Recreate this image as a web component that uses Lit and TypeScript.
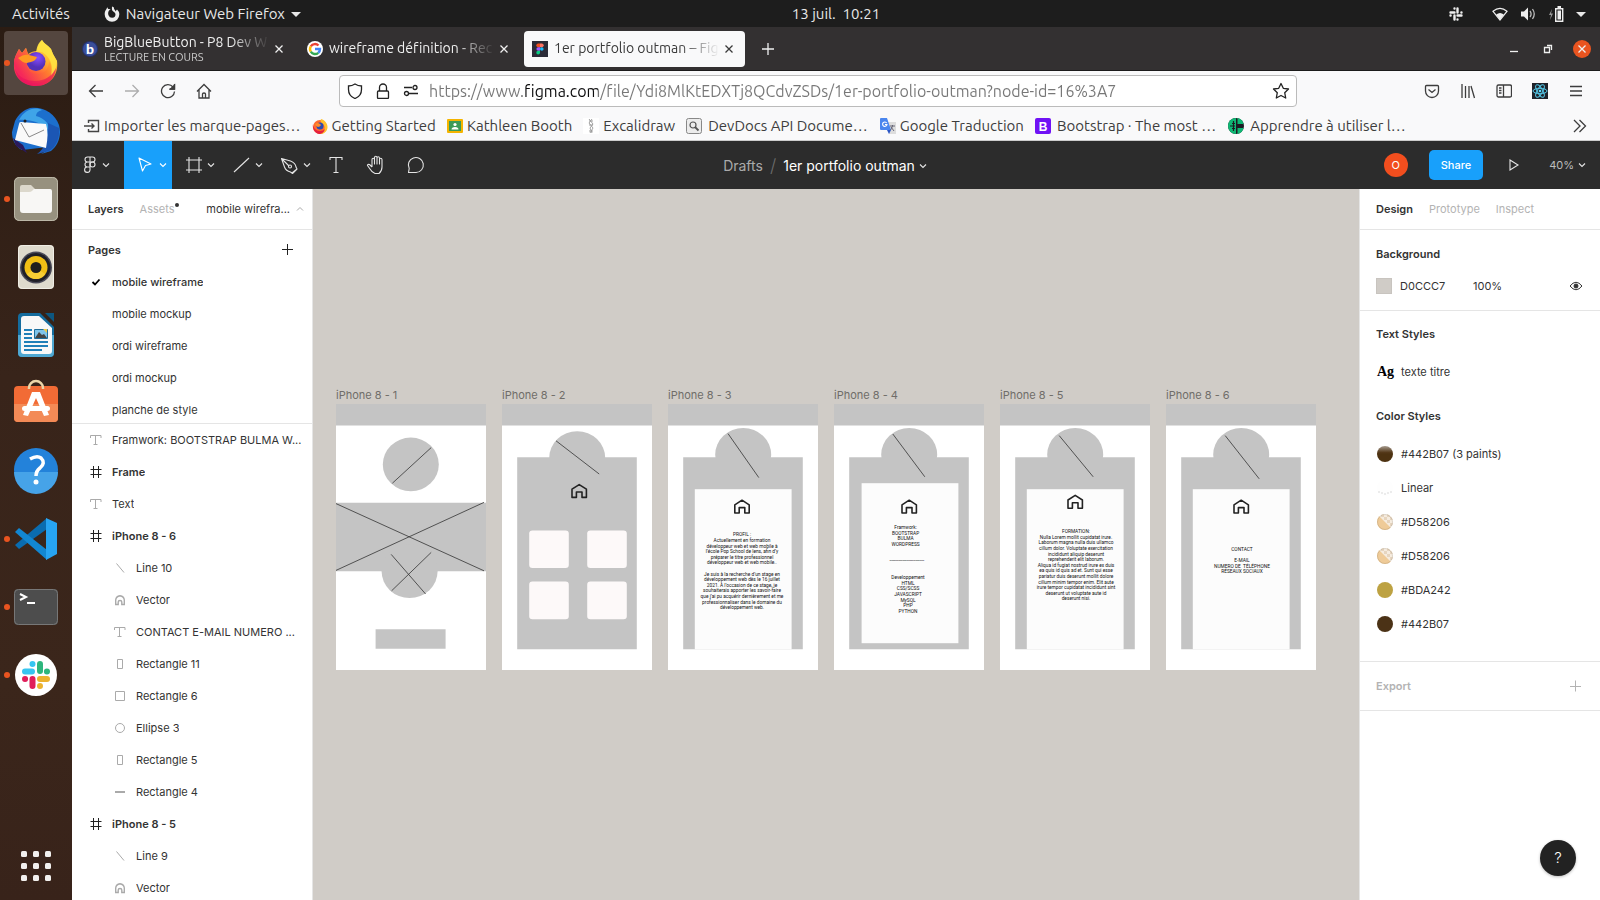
import { LitElement, html, svg, css, nothing, type TemplateResult, type SVGTemplateResult } from "lit";
import { customElement } from "lit/decorators.js";
import { classMap } from "lit/directives/class-map.js";

const icon = (size: number, content: SVGTemplateResult, cls = "") =>
  html`<svg class="icon ${cls}" width=${size} height=${size} viewBox="0 0 ${size} ${size}" aria-hidden="true">${content}</svg>`;

const CHEVRON = svg`<path d="M1 2.500l3 3 3-3" />`;
const CLOSE = svg`<path d="M1.500 1.500l7 7M8.500 1.500l-7 7" />`;
const HOUSE = svg`<path d="M-18 16.500V-4L0-15.500 18-4v20.500H7V3H-7v13.500z" />`;

/* ---------- GNOME top bar ---------- */
@customElement("system-bar")
class SystemBar extends LitElement {
  static styles = css`
    :host { display: grid; grid-template-columns: 1fr auto 1fr; align-items: center; height: 27px; padding-left: 72px;
      background: #1d1d1d; color: #e8e8e8; font: 15px/20px "Ubuntu", "Noto Sans", sans-serif; font-variant-ligatures: none; }
    .left { display: flex; align-items: center; margin-left: -60px; gap: 34px; }
    button { all: unset; display: flex; align-items: center; }
    .app { gap: 6px; }
    .right { display: flex; justify-content: flex-end; align-items: center; gap: 12px; padding-right: 14px; }
    .apart { margin-right: 17px; }
    time { white-space: pre; }
  `;
  render() {
    return html`
      <div class="left">
        <button>Activités</button>
        <button class="app">
          ${icon(16, svg`<path fill="#eee" fill-rule="evenodd" d="M8 .5c2 .4 2.300 1.500 2 2.800 1 .4 1.500 1.200 1.400 2.300L13 3.500c1.600 1.500 2.400 3 2.300 5A7.400 7.400 0 0 1 8 15.800 7.400 7.400 0 0 1 .7 8.500C.6 6.300 1.200 4.500 2.500 3c.2-.8.500-1.300 1-1.700 0 .8.300 1.300.8 1.700C5.300 2.800 6 3 6.800 3.500 5.500 3.800 5 4.500 4.500 5.500 4 7 4 8 4.500 9.200A3.800 3.800 0 0 0 8.200 11.700 3.500 3.500 0 0 0 11.500 8C11 6 9 5.700 8.300 4.500 7.700 3.300 8 2 8 .5z"/>`)}
          Navigateur Web Firefox
          ${icon(10, svg`<path fill="#e8e8e8" d="M0 3h10l-5 5z"/>`)}
        </button>
      </div>
      <time>13 juil.  10:21</time>
      <div class="right">
        ${icon(14, svg`<g fill="none" stroke="#eee" stroke-width="2.400" stroke-linecap="round"><path d="M5.500 1.500v.1M8.500 1.500v4M1.500 5.500h4M12.500 5.500h-.1M1.500 8.500h.1M8.500 8.500h4M5.500 8.500v4M8.500 12.500v-.1"/></g>`, "apart")}
        ${icon(16, svg`<path fill="none" stroke="#eee" stroke-width="1.200" d="M1 5.300Q8-.5 15 5.300L8 14z"/><path fill="#eee" d="M4.200 8.500Q8 5.500 11.800 8.500L8 14z"/>`)}
        ${icon(16, svg`<path fill="#eee" d="M1 5.500h3l4-4v13l-4-4H1z"/><path fill="none" stroke="#bbb" stroke-width="1.300" d="M10 5q2.200 3 0 6M12.500 3q3.500 5 0 10"/>`)}
        ${icon(16, svg`<path fill="#999" d="M4 3L1 9h2l-1 5 3-6.500H3z"/><path fill="none" stroke="#eee" stroke-width="1.400" d="M7.700 2.700h7v12.600h-7z"/><path fill="#eee" d="M9.500 0h3.500v2H9.500zM9.500 4.500h3.500v9H9.500z"/>`)}
        ${icon(10, svg`<path fill="#e8e8e8" d="M0 3h10l-5 5z"/>`)}
      </div>`;
  }
}

/* ---------- Dock ---------- */
interface DockEntry { name: string; art: SVGTemplateResult; running?: boolean; active?: boolean }

const DOCK: DockEntry[] = [
  { name: "Firefox", running: true, active: true, art: svg`
    <defs>
      <linearGradient id="fx" x1=".8" y1="0" x2=".3" y2="1"><stop offset="0" stop-color="#fff04f"/><stop offset=".4" stop-color="#ffb02e"/><stop offset=".7" stop-color="#ff5a3a"/><stop offset="1" stop-color="#ee1466"/></linearGradient>
      <radialGradient id="fg" cx=".6" cy=".3"><stop offset="0" stop-color="#8a4dff"/><stop offset="1" stop-color="#5330b8"/></radialGradient>
      <linearGradient id="fb" x1="1" y1="0" x2=".1" y2=".6"><stop offset="0" stop-color="#ffc930"/><stop offset=".45" stop-color="#ff7a2f"/><stop offset="1" stop-color="#f5285a"/></linearGradient>
    </defs>
    <path fill="url(#fx)" d="M30 1c2 4 6 5 9 9l2 5 4 7c2 14-7 25-21 25C10 47 1 37 2 25c0-6 2-9 5-15l3 4c1-1 3-4 4-5l2 6c3-2 6-3 9-3 0-4 2-8 5-11z"/>
    <path fill="#ffe442" d="M30 1c2 4 6 5 9 9l2 5 4 7c0 6-2 11-6 15 2-10 0-16-5-21-3-3-5-4-10-3 1-5 2-9 6-12z" opacity=".85"/>
    <path fill="url(#fb)" d="M2 25c0-6 2-9 5-15l3 4c1-1 3-4 4-5l2 6 9 3c-1 5-5 6-10 7 1 7 5 10 10 10 8 0 12-6 12-13 6 11-2 22-14 22C10 44 2 35 2 25z"/>
    <circle cx="24" cy="22.500" r="9.500" fill="url(#fg)"/>
    <path fill="#ff9a22" d="M6 19c4-3 8-4 11-3l8 2c-1 4-6 5-10 6-3 0-6-2-9-5z"/>
    <path fill="#e8115e" d="M3 30c4 9 12 12 20 12 10 0 17-5 21-13-1 11-9 18-20 18S5 40 3 30z" opacity=".6"/>` },
  { name: "Thunderbird", art: svg`
    <path fill="#1c6fcd" d="M3 14C6 8 11 3 18 1c13-2 25 5 29 17 3 10-1 21-8 26l-10 3c4-2 6-4 7-7L10 43C3 39 0 33 0 25z"/>
    <path fill="#3fa4e8" d="M7 13C12 3 22-1 30 3c-4 1-6 3-6 6 9 2 14 9 15 17-6-9-19-14-32-13z"/>
    <path fill="#1b56b4" d="M36 16l11 5c1 10-3 19-10 23l-12 3c8-5 12-17 11-31z"/>
    <path fill="#2a1a5c" d="M1 31l3 8 11 7-4-8z"/>
    <path fill="#fafafa" d="M9 15l25 2q3 9 0 24L3 33l4-16q0-2 2-2z"/>
    <path fill="none" stroke="#8a8a8a" d="M9 16l8 14 15-7"/><circle cx="13" cy="14" r="1.500" fill="#222"/>` },
  { name: "Fichiers", running: true, art: svg`
    <rect x="2" y="2" width="44" height="44" rx="5" fill="#97917f"/><rect x="2.500" y="2.500" width="43" height="43" rx="5" fill="none" stroke="#bdb8a8"/>
    <path fill="#dcd8cc" d="M8 14V12q0-2 2-2h9l4 4h14q2 0 2 2v5H8z"/><path fill="#f8f7f5" d="M8 17h9q2 0 3-1l2-2h16q2 0 2 2v19q0 3-3 3H11q-3 0-3-3z"/>` },
  { name: "Rhythmbox", art: svg`
    <rect x="6" y="2" width="36" height="44" rx="4" fill="#dedacd"/><rect x="6.500" y="2.500" width="35" height="43" rx="4" fill="none" stroke="#f0eee6"/>
    <circle cx="24" cy="24.500" r="16" fill="#4a4a58"/><circle cx="24" cy="24.500" r="14.500" fill="#1f1f27"/><circle cx="24" cy="24.500" r="11.500" fill="#f0be15"/><path d="M14.500 31a11.500 11.500 0 0 0 19 0l-5-3h-9z" fill="#fbd84a" opacity=".6"/><circle cx="24" cy="24.500" r="5.500" fill="#1e1e1e"/>` },
  { name: "LibreOffice Writer", art: svg`
    <path fill="#146c9e" d="M10 2h18l14 14v26q0 4-4 4H10q-4 0-4-4V6q0-4 4-4z"/><path fill="#4fa8d2" d="M6 24h36v18q0 4-4 4H10q-4 0-4-4z"/><path fill="#0d5780" d="M33 2h9v9z"/>
    <path fill="#f8f8f8" d="M12 5h15l13 12v23q0 3-3 3H12q-3 0-3-3V8q0-3 3-3z"/>
    <path stroke="#1f7fb8" stroke-width="2" d="M12 19h8M12 23h8M12 27h8M12 31h24M12 35h24M12 39h18"/>
    <path fill="#7fc4ea" stroke="#1f6d9a" d="M22.500 18.500h13v9h-13z"/><path fill="#444" d="M23 27l4-6 3 3 2-1 3 4z"/><path fill="#ecc94b" d="M31 18h4v4z"/>` },
  { name: "Ubuntu Software", art: svg`
    <rect x="2" y="7" width="44" height="36" rx="4" fill="#f26b35"/><path fill="#f38a56" d="M2 25h44v14q0 4-4 4H6q-4 0-4-4z"/><path fill="none" stroke="#ecd6a8" stroke-width="2.500" d="M17 10V9a7 7 0 0 1 14 0v1"/>
    <path fill="#fff" d="M20 13h8l9 23-5 1-8-18-8 18-5-1z"/><rect x="10" y="27" width="28" height="5" rx="2.500" fill="#fff"/>` },
  { name: "Aide", art: svg`
    <circle cx="24" cy="23" r="22" fill="#2382da"/><path fill="#46a3e8" d="M2 25h44a22 22 0 0 1-44 0z"/>
    <path fill="none" stroke="#fff" stroke-width="3.500" d="M18 12q7-4 11-1 5 5-1 10-4 3-4 8"/><circle cx="24" cy="35" r="2.500" fill="#fff"/>` },
  { name: "Visual Studio Code", running: true, art: svg`
    <path fill="#0a6cb0" d="M3 30l4 4 28-20V3z"/><path fill="#1287d2" d="M3 17l4-4 28 22v10z"/><path fill="#27a4f2" d="M34 3l11 5v31l-11 6z"/>` },
  { name: "Terminal", running: true, art: svg`
    <rect x="2" y="6" width="44" height="36" rx="4" fill="#4d4d4d"/><rect x="2.500" y="6.500" width="43" height="35" rx="4" fill="none" stroke="#777"/>
    <path fill="none" stroke="#fff" stroke-width="2" d="M8 11l6 3-6 3M15 20h8"/>` },
  { name: "Slack", running: true, art: svg`
    <circle cx="24" cy="24" r="21" fill="#fff"/>
    <g stroke-width="6" stroke-linecap="round">
      <path stroke="#36c5f0" d="M13 20.500h7M20.500 13v.1"/><path stroke="#2eb67d" d="M28 13v7M35 20.500h-.1"/>
      <path stroke="#e01e5a" d="M20.500 28v7M13 28h.1"/><path stroke="#ecb22e" d="M28 28h7M28 35v.1"/>
    </g>` },
];

@customElement("app-dock")
class AppDock extends LitElement {
  static styles = css`
    :host { display: flex; flex-direction: column; gap: 4px; padding: 4px; box-sizing: border-box; overflow: hidden;
      background: linear-gradient(#2b1c13, #38241a 40%, #3b261b 75%, #38231a); }
    button { all: unset; flex: none; position: relative; display: grid; place-items: center; height: 64px; border-radius: 4px; }
    .active { background: #54463f; }
    .running::before { content: ""; position: absolute; left: 0; top: 29px; width: 6px; height: 6px; border-radius: 50%; background: #e95420; }
    .apps { margin-top: auto; height: 60px; }
  `;
  render() {
    return html`
      ${DOCK.map((d) => html`<button aria-label=${d.name} class=${classMap({ running: !!d.running, active: !!d.active })}>${icon(48, d.art)}</button>`)}
      <button class="apps" aria-label="Afficher les applications">
        ${icon(30, svg`${[0, 12, 24].map((x) => [0, 12, 24].map((y) => svg`<rect x=${x} y=${y} width="6" height="6" rx="1.500" fill="#f2f0ee"/>`))}`)}
      </button>`;
  }
}

/* ---------- Browser chrome ---------- */
const FAV = {
  bbb: svg`<circle cx="8" cy="8" r="8" fill="#25316f"/><circle cx="8" cy="8" r="7" fill="#3a4f9b"/><text x="8" y="12.500" text-anchor="middle" font-family="Lato" font-weight="900" font-size="14" fill="#fff">b</text>`,
  google: svg`<circle cx="8" cy="8" r="8" fill="#fff"/><g fill="none" stroke-width="2.400"><path stroke="#ea4335" d="M3.800 5.300A5 5 0 0 1 11.500 4.500"/><path stroke="#fbbc05" d="M3.800 10.700a5.200 5.200 0 0 1 0-5.400"/><path stroke="#34a853" d="M11.300 11.800A5 5 0 0 1 3.800 10.700"/><path stroke="#4285f4" d="M8 8h5a5 5 0 0 1-1.700 3.800"/></g>`,
  figma: svg`<path fill="#2c2c38" d="M0 0h16v16H0z"/><path fill="#f24e1e" d="M8 2.500v3.700H6.200a1.850 1.850 0 0 1 0-3.700z"/><path fill="#ff7262" d="M8 2.500h1.800a1.850 1.850 0 0 1 0 3.700H8z"/><path fill="#a259ff" d="M8 6.200v3.600H6.200a1.800 1.800 0 0 1 0-3.600z"/><circle cx="9.800" cy="8" r="1.800" fill="#1abcfe"/><path fill="#0acf83" d="M8 9.800v1.900a1.850 1.850 0 1 1-1.800-1.900z"/>`,
  import: svg`<path fill="none" stroke="#444" stroke-width="1.400" d="M4.500 5V2.500h10v11h-10V11M0 8h10M7.500 5.500L10 8l-2.500 2.500"/>`,
  firefox: svg`<circle cx="8" cy="9" r="7" fill="#ff6a2e"/><path fill="#ffc12e" d="M9 1c4 1 7 5 6.500 9-1 4-4 6-7.500 6 5-3 6-7 3-10-2-1-3-3-2-5z"/><circle cx="8" cy="8" r="3.500" fill="#2a4bb0"/><path fill="#ff8a2a" d="M3 6q3-2 5 0l1 1q-1 2-3 2-2 0-3-3z"/><path fill="#e5203f" d="M1 6c0 4 3 7 7 7 2 0 4-1 5-2-1 4-4 5-6 5-4-1-7-5-6-10z"/>`,
  classroom: svg`<rect y="1" width="16" height="14" rx="1" fill="#f4b400"/><path fill="#3d9a57" d="M2 3h12v10H2z"/><circle cx="8" cy="6.500" r="1.600" fill="#fff"/><path fill="#fff" d="M4.500 11.500q0-2.500 3.500-2.500t3.500 2.500z"/>`,
  excalidraw: svg`<path fill="#fff" d="M0 0h16v16H0z"/><path fill="none" stroke="#999" stroke-width=".9" d="M6 1l4 5-3 4 2 5M9 1L6 5l4 5-3 5M6 3h4M6 7h4M6 13h4"/>`,
  devdocs: svg`<rect x=".5" y=".5" width="15" height="15" rx="2" fill="#ececec" stroke="#888"/><circle cx="7" cy="7" r="3" fill="none" stroke="#555" stroke-width="1.200"/><path stroke="#555" stroke-width="1.800" d="M9 9l3.500 3.500"/>`,
  translate: svg`<path fill="#ddd" d="M6 4h10v12H9z"/><path fill="#4a86ee" d="M1 0h6l4 12H1q-1 0-1-1V1q0-1 1-1z"/><path fill="#2a56c6" d="M7 12h4l-2 4z"/><path fill="none" stroke="#fff" stroke-width="1.100" d="M6.700 5A2.200 2.200 0 1 0 7 6.500H5"/><path fill="none" stroke="#667" d="M10 8h5M12.500 7v1q-1 3-2 4M11 9l3 4"/>`,
  bootstrap: svg`<rect width="16" height="16" rx="2" fill="#7012f5"/><text x="8" y="12.500" text-anchor="middle" font-family="Liberation Sans" font-weight="700" font-size="12" fill="#fff">B</text>`,
  oc: svg`<circle cx="8" cy="8" r="8" fill="#1b1b22"/><path fill="#0fb874" d="M8 0v16A8 8 0 0 1 8 0z"/><path fill="#0fb874" d="M9.500 0q5 1 6 6h-6zM9.500 10h6q-1 5-6 6z"/><path stroke="#1b1b22" stroke-width="1.200" fill="none" d="M2 8h5M4 5.500h3M4 10.500h3M5.500 3v10"/>`,
};

const BOOKMARKS: [SVGTemplateResult, string, boolean?][] = [
  [FAV.import, "Importer les marque-pages…"],
  [FAV.firefox, "Getting Started"],
  [FAV.classroom, "Kathleen Booth"],
  [FAV.excalidraw, "Excalidraw"],
  [FAV.devdocs, "DevDocs API Docume…", true],
  [FAV.translate, "Google Traduction"],
  [FAV.bootstrap, "Bootstrap · The most …", true],
  [FAV.oc, "Apprendre à utiliser l…", true],
];

@customElement("browser-chrome")
class BrowserChrome extends LitElement {
  static styles = css`
    :host { display: block; font: 14px/18px "Ubuntu", "Noto Sans", sans-serif; font-variant-ligatures: none; color: #3d3d3d; }
    button { all: unset; display: grid; place-items: center; }
    .tabs { display: flex; align-items: center; height: 43px; gap: 4px; padding: 0 9px 0 2px; background: #333031; border-bottom: 1px solid #1c1b1b; color: #f0f0f0; }
    .tab { display: flex; align-items: center; gap: 6px; box-sizing: border-box; width: 221px; height: 36px; padding: 0 11px 0 8px; border-radius: 4px; }
    .tab.current { background: #f9f9fa; color: #3a3a3a; }
    .label { flex: 1; min-width: 0; margin-right: -6px; overflow: hidden; white-space: nowrap; mask-image: linear-gradient(90deg, #000 calc(100% - 44px), transparent calc(100% - 4px)); }
    .label small { display: block; font-size: 11px; line-height: 12px; color: #ccc; }
    .label span { display: block; line-height: 17px; }
    .line { fill: none; stroke: currentColor; stroke-width: 1.3; }
    .new { width: 38px; height: 36px; }
    .window { display: flex; align-items: center; gap: 16px; margin-left: auto; }
    .quit { width: 18px; height: 18px; border-radius: 50%; background: #e95420; }
    .nav { display: flex; align-items: center; height: 39px; padding: 0 6px; background: #f9f9fa; }
    .nav button { width: 36px; height: 32px; }
    .dim { opacity: .4; }
    .url { display: flex; align-items: center; flex: 1; margin: 0 117px; box-sizing: border-box; height: 32px; padding: 0 6px 0 7px; gap: 10px; background: #fff; border: 1px solid #bbb; border-radius: 4px; color: #222; }
    .url .icon { margin-right: 2px; }
    .url input { all: unset; flex: 1; min-width: 0; margin-left: -2px; font-size: 16px; line-height: 24px; color: transparent;
      background: linear-gradient(90deg, #777 95px, #0c0c0d 95px 169px, #777 169px); background-clip: text; -webkit-background-clip: text; }
    .nav .url button { width: 18px; }
    .nav .url button .icon { margin: 0; }
    .marks { display: flex; align-items: center; gap: 11px; box-sizing: border-box; height: 31px; padding: 2px 13px 0 12px; background: #f9f9fa; border-bottom: 1px solid #ccc; font-size: 15px; line-height: 20px; }
    .marks a { display: flex; align-items: center; gap: 4px; color: inherit; text-decoration: none; white-space: nowrap; }
    .marks a.roomy { gap: 6px; margin-right: 1px; }
    .marks button { margin-left: auto; }
  `;
  render() {
    return html`
      <div class="tabs" role="tablist">
        ${this.tab(FAV.bbb, html`<span>BigBlueButton - P8 Dev W</span><small>LECTURE EN COURS</small>`)}
        ${this.tab(FAV.google, html`<span>wireframe définition - Rec</span>`)}
        ${this.tab(FAV.figma, html`<span>1er portfolio outman – Fig</span>`, true)}
        <button class="new" aria-label="Nouvel onglet">${icon(14, svg`<path d="M7 1v12M1 7h12"/>`, "line")}</button>
        <div class="window">
          <button aria-label="Réduire">${icon(18, svg`<path d="M5 11.500h8"/>`, "line")}</button>
          <button aria-label="Restaurer">${icon(18, svg`<path d="M5.500 7.500h5v5h-5zM8 5.500h4.500V10"/>`, "line")}</button>
          <button class="quit" aria-label="Fermer">${icon(10, CLOSE, "line")}</button>
        </div>
      </div>
      <div class="nav">
        <button aria-label="Précédent">${icon(16, svg`<path d="M15 8H2M7.500 2L1.500 8l6 6"/>`, "line")}</button>
        <button class="dim" aria-label="Suivant">${icon(16, svg`<path d="M1 8h13M8.500 2l6 6-6 6"/>`, "line")}</button>
        <button aria-label="Actualiser">${icon(16, svg`<path d="M13 4A6.500 6.500 0 1 0 14.500 8.500M14.500 1v5h-5"/><path fill="currentColor" d="M14.500 2v4h-4z"/>`, "line")}</button>
        <button aria-label="Accueil">${icon(16, svg`<path d="M1 8.500L8 1.500l7 7M3 7v8h10V7M6.500 15v-4q0-1 1.500-1t1.500 1v4"/>`, "line")}</button>
        <div class="url">
          ${icon(16, svg`<path d="M8 1q3 2 6.500 2v3.500C14.500 11 12 14 8 15.500 4 14 1.500 11 1.500 6.500V3Q5 3 8 1z"/>`, "line")}
          ${icon(16, svg`<rect x="2.500" y="8" width="11" height="7.500" rx="1"/><path d="M4.500 8V4.500a3.500 3.500 0 0 1 7 0V8"/>`, "line")}
          ${icon(16, svg`<path d="M1 4.500h8M6 10.500h9"/><circle cx="12" cy="4.500" r="2"/><circle cx="3.500" cy="10.500" r="2"/>`, "line")}
          <input aria-label="Adresse" value="https://www.figma.com/file/Ydi8MlKtEDXTj8QCdvZSDs/1er-portfolio-outman?node-id=16%3A7" />
          <button aria-label="Marquer cette page">${icon(18, svg`<path stroke-linejoin="round" d="M9 1.500l2.300 4.800 5.200.7-3.800 3.700 1 5.300L9 13.500 4.300 16l1-5.300L1.500 7l5.200-.7z"/>`, "line")}</button>
        </div>
        <button aria-label="Pocket">${icon(16, svg`<path d="M2.500 2.500h11q1 0 1 1V8a6.500 6.500 0 0 1-13 0V3.500q0-1 1-1zM4.500 6.500L8 9.500l3.500-3"/>`, "line")}</button>
        <button aria-label="Bibliothèque">${icon(16, svg`<path d="M2 1v14M5.500 3v12M9 3v12M11 3l3.500 12"/>`, "line")}</button>
        <button aria-label="Panneaux">${icon(16, svg`<rect x="1" y="2" width="14.500" height="12" rx="1.500"/><path d="M7.500 2v12M3 5h2.500M3 7.500h2.500M3 10h2.500"/>`, "line")}</button>
        <button aria-label="React">${icon(16, svg`<path fill="#20232a" d="M0 0h16v16H0z"/><g fill="none" stroke="#55c8e8"><ellipse cx="8" cy="8" rx="7" ry="2.700"/><ellipse cx="8" cy="8" rx="7" ry="2.700" transform="rotate(60 8 8)"/><ellipse cx="8" cy="8" rx="7" ry="2.700" transform="rotate(120 8 8)"/></g><circle cx="8" cy="8" r="1.300" fill="#61dafb"/>`)}</button>
        <button aria-label="Menu">${icon(16, svg`<path d="M2 3.500h12M2 8h12M2 12.500h12"/>`, "line")}</button>
      </div>
      <nav class="marks">
        ${BOOKMARKS.map(([art, name, roomy]) => html`<a href="#" class=${roomy ? "roomy" : ""}>${icon(16, art)}<span>${name}</span></a>`)}
        <button aria-label="Plus de marque-pages">${icon(16, svg`<path d="M3 2l6 6-6 6M8.500 2l6 6-6 6"/>`, "line")}</button>
      </nav>`;
  }
  tab(art: SVGTemplateResult, label: TemplateResult, current = false) {
    return html`<div role="tab" class=${classMap({ tab: true, current })}>
      ${icon(16, art)}<div class="label">${label}</div>
      <button aria-label="Fermer l’onglet">${icon(10, CLOSE, "line")}</button>
    </div>`;
  }
}

/* ---------- Figma toolbar ---------- */
const TOOLS: { name: string; art: SVGTemplateResult; menu?: boolean; active?: boolean }[] = [
  { name: "Move", menu: true, active: true, art: svg`<path d="M3 3l12 6-5.500 1.500L6.500 16z" stroke-linejoin="round"/>` },
  { name: "Frame", menu: true, art: svg`<path d="M5 2v16M15 2v16M2 5h16M2 15h16"/>` },
  { name: "Shape", menu: true, art: svg`<path d="M2 17L17 3"/>` },
  { name: "Pen", menu: true, art: svg`<path stroke-linejoin="round" d="M1.500 3.500l9 2.500q5 2 5.500 6l1 2-4.500 4.500-2-1.500Q6 16 4.500 12zM2 4l7 7M12 18l5-4"/><circle cx="10" cy="11.500" r="1.500"/>` },
  { name: "Text", art: svg`<path d="M4 5V2.500h12V5M10 2.500V17M7.500 17.500h5"/>` },
  { name: "Hand", art: svg`<path stroke-linejoin="round" d="M6 12V4.500q0-1.300 1.200-1.300T8.500 4.500V9 2.500q0-1.300 1.200-1.300T11 2.500V9 3q0-1.200 1.200-1.200T13.500 3v6-4.500q0-1.200 1.200-1.200T16 4.500V12q0 4-3 6.500H9q-3-1-5-4.500L1.500 10.500q0-1.500 2-1L6 12"/>` },
  { name: "Comment", art: svg`<path stroke-linejoin="round" d="M2.500 17.500H10A7.500 7.500 0 1 0 3.200 13.500z"/>` },
];

@customElement("figma-toolbar")
class FigmaToolbar extends LitElement {
  static styles = css`
    :host { display: grid; grid-template-columns: 1fr auto 1fr; height: 48px; background: #2c2c2c; color: #fff; font: 11px/16px "Inter", sans-serif; }
    button { all: unset; }
    .tools { display: flex; }
    .tool { display: flex; align-items: center; justify-content: center; box-sizing: border-box; width: 40px; gap: 3px; }
    .tool.menu { width: 48px; padding-left: 7px; }
    .tool.brand { width: 52px; gap: 6px; padding: 0 3px 0 0; }
    .tool.active { background: #18a0fb; }
    .line { fill: none; stroke: #e5e5e5; stroke-width: 1.1; }
    .tool.active .line { stroke: #fff; }
    .file { display: flex; align-items: center; gap: 7px; padding: 2px 22px 0 0; font-size: 14px; line-height: 20px; }
    .drafts { color: #aaa; text-decoration: none; }
    .slash { color: #6b6b6b; font-size: 18px; font-weight: 300; }
    .file button { display: flex; align-items: center; gap: 4px; }
    .actions { display: flex; align-items: center; justify-content: flex-end; padding-right: 14px; }
    .avatar { display: grid; place-items: center; width: 24px; height: 24px; margin-right: 21px; border-radius: 50%; background: #f24e1e; }
    .share { padding: 7px 12px; margin-right: 25px; border-radius: 5px; background: #18a0fb; font-weight: 500; }
    .play { display: flex; margin-right: 29px; }
    .zoom { display: flex; align-items: center; gap: 4px; color: #bdbdbd; }
  `;
  render() {
    return html`
      <div class="tools">
        <button class="tool menu brand" aria-label="Menu principal">
          <svg class="line" width="12" height="18" viewBox="0 0 12 18"><path d="M6 1H3.500a2.500 2.500 0 0 0 0 5H6zM6 1h2.500a2.500 2.500 0 0 1 0 5H6zM6 6H3.500a2.500 2.500 0 0 0 0 5H6zM6 11H3.500A2.700 2.700 0 1 0 6 14z"/><circle cx="8.500" cy="8.500" r="2.500"/></svg>
          ${icon(8, CHEVRON, "line")}
        </button>
        ${TOOLS.map((t) => html`<button aria-label=${t.name} class=${classMap({ tool: true, menu: !!t.menu, active: !!t.active })}>
          ${icon(20, t.art, "line")}${t.menu ? icon(8, CHEVRON, "line") : nothing}</button>`)}
      </div>
      <div class="file"><a class="drafts" href="#">Drafts</a><span class="slash">/</span><button>1er portfolio outman ${icon(8, CHEVRON, "line")}</button></div>
      <div class="actions">
        <span class="avatar">O</span>
        <button class="share">Share</button>
        <button class="play" aria-label="Présenter">${icon(12, svg`<path d="M2 1l8 5-8 5z"/>`, "line")}</button>
        <button class="zoom">40% ${icon(8, CHEVRON, "line")}</button>
      </div>`;
  }
}

/* ---------- Layers panel ---------- */
const KIND: Record<string, SVGTemplateResult> = {
  text: svg`<path d="M.5 4V1.500h10.500V4M5.500 1.500v9M3.500 10.500h4"/>`,
  frame: svg`<path d="M3.500 0v12M8.500 0v12M.5 3.500h11M.5 8.500h11"/>`,
  line: svg`<path d="M2.500 1.500l7.500 9"/>`,
  vector: svg`<path stroke-width="1.400" d="M1.700 10.500V6Q2 2.500 6 1.800q4 .7 4.300 4.200v4.500H7.800V8q0-1.500-1.800-1.500T4.200 8v2.500z"/>`,
  tall: svg`<path d="M3.500 1.500h5v9h-5z"/>`,
  rect: svg`<path d="M1.500 1.500h9v9h-9z"/>`,
  ellipse: svg`<circle cx="6" cy="6" r="4.500"/>`,
  bar: svg`<path stroke-width="2" d="M1 6h10"/>`,
};
const PAGES = ["mobile wireframe", "mobile mockup", "ordi wireframe", "ordi mockup", "planche de style"];
const LAYERS: [string, string, boolean?][] = [
  ["text", "Framwork: BOOTSTRAP BULMA W..."],
  ["frame", "Frame"],
  ["text", "Text"],
  ["frame", "iPhone 8 - 6"],
  ["line", "Line 10", true],
  ["vector", "Vector", true],
  ["text", "CONTACT E-MAIL NUMERO ...", true],
  ["tall", "Rectangle 11", true],
  ["rect", "Rectangle 6", true],
  ["ellipse", "Ellipse 3", true],
  ["tall", "Rectangle 5", true],
  ["bar", "Rectangle 4", true],
  ["frame", "iPhone 8 - 5"],
  ["line", "Line 9", true],
  ["vector", "Vector", true],
];

@customElement("layers-panel")
class LayersPanel extends LitElement {
  static styles = css`
    :host { display: flex; flex-direction: column; box-sizing: border-box; min-height: 0; overflow: hidden; background: #fff; border-right: 1px solid #e5e5e5; color: #333; font: 11px/16px "Inter", sans-serif; }
    button { all: unset; display: flex; align-items: center; }
    .head { display: flex; align-items: center; flex: none; height: 40px; padding: 0 8px 0 16px; border-bottom: 1px solid #e5e5e5; }
    .bold { font-weight: 600; }
    .assets { position: relative; margin-left: 16px; color: #b3b3b3; }
    .assets::after { content: ""; position: absolute; right: -5px; top: 2px; width: 4px; height: 4px; border-radius: 50%; background: #333; }
    .page { margin-left: auto; gap: 6px; }
    .pages { flex: none; box-sizing: border-box; height: 194px; overflow: hidden; padding-top: 4px; border-bottom: 1px solid #e5e5e5; }
    .title { display: flex; align-items: center; justify-content: space-between; height: 32px; padding: 0 18px 0 16px; font-weight: 600; }
    ul { margin: 0; padding: 0; list-style: none; }
    li { display: flex; align-items: center; gap: 10px; height: 32px; padding: 0 8px 0 18px; }
    li span { overflow: hidden; white-space: nowrap; text-overflow: ellipsis; }
    .pages li { padding-left: 40px; }
    .pages li.on { padding-left: 18px; font-weight: 500; }
    .child { padding-left: 42px; }
    .icon { flex: none; fill: none; stroke: #aaa; }
    .strong { stroke: #222; }
    .check { stroke: #000; stroke-width: 1.8; }
  `;
  render() {
    return html`
      <div class="head">
        <button class="bold">Layers</button>
        <button class="assets">Assets</button>
        <button class="page">mobile wirefra... ${icon(8, svg`<path d="M1 5.500l3-3 3 3"/>`)}</button>
      </div>
      <section class="pages">
        <div class="title">Pages <button aria-label="Ajouter une page">${icon(14, svg`<path d="M7.500 1v11M2 6.500h11"/>`, "strong")}</button></div>
        <ul>${PAGES.map((p, i) => html`<li class=${i ? "" : "on"}>${i ? nothing : icon(12, svg`<path d="M2.500 6l2.500 2.500 4.500-5"/>`, "check")}<span>${p}</span></li>`)}</ul>
      </section>
      <ul>
        ${LAYERS.map(([kind, name, child]) => html`<li class=${classMap({ child: !!child, bold: kind === "frame" })}>
          ${icon(12, KIND[kind], kind === "frame" ? "strong" : "")}<span>${name}</span></li>`)}
      </ul>`;
  }
}

/* ---------- Canvas ---------- */
type Pt = [number, number, number, number];
interface Board { head?: number; lines: Pt[]; sheet?: Pt; home?: [number, number]; copy?: [number, number, string][]; extra?: SVGTemplateResult }

const flow = (x: number, y: number, rows: string[]): [number, number, string][] => rows.map((r, i) => [x, y + i * 14, r]);

const BOARDS: Board[] = [
  {
    lines: [[141, 198, 238, 109], [0, 249, 370, 417], [0, 416, 370, 246], [138, 376, 224, 475], [238, 371, 139, 467]],
    extra: svg`<ellipse cx="187" cy="151" rx="70" ry="67"/><path d="M0 247h375v171H0z"/><ellipse cx="184" cy="418" rx="70" ry="67"/><path d="M99 563h175v49H99z"/>`,
  },
  {
    head: 135, lines: [[135, 92, 243, 175]], home: [193, 217],
    extra: svg`<g fill="#fdf9f9"><rect x="68" y="316" width="99" height="94" rx="8"/><rect x="213" y="316" width="99" height="94" rx="8"/><rect x="68" y="444" width="99" height="94" rx="8"/><rect x="213" y="444" width="99" height="94" rx="8"/></g>`,
  },
  {
    head: 127, lines: [[150, 74, 227, 184]], sheet: [67, 213, 242, 400], home: [185, 256],
    copy: flow(185, 331, ["PROFIL :", "Actuellement en formation", "développeur web et web mobile à", "l’école Pop School de lens, afin d’y", "préparer le titre professionnel", "développeur web et web mobile..", "", "Je suis à la recherche d’un stage en", "développement web dès le 16 juillet", "2021. À l’occasion de ce stage, je", "souhaiterais apporter les savoir-faire", "que j’ai pu acquérir dernièrement et me", "professionnaliser dans le domaine du", "développement web."]),
  },
  {
    head: 127, lines: [[147, 75, 227, 182]], sheet: [69, 198, 242, 400], home: [188, 256],
    copy: [...flow(179, 313, ["Framwork:", "BOOTSTRAP", "BULMA", "WORDPRESS"]), [182, 390, "________________"], ...flow(185, 438, ["Developpement", "HTML", "CSS/SCSS", "JAVASCRIPT", "MySQL", "PHP", "PYTHON"])],
  },
  {
    head: 127, lines: [[148, 79, 233, 182]], sheet: [67, 213, 242, 400], home: [188, 244],
    copy: flow(190, 323, ["FORMATION:", "Nulla Lorem mollit cupidatat irure.", "Laborum magna nulla duis ullamco", "cillum dolor. Voluptate exercitation", "incididunt aliquip deserunt", "reprehenderit elit laborum.", "Aliqua id fugiat nostrud irure ex duis", "ea quis id quis ad et. Sunt qui esse", "pariatur duis deserunt mollit dolore", "cillum minim tempor enim. Elit aute", "irure tempor cupidatat incididunt sint", "deserunt ut voluptate aute id", "deserunt nisi."]),
  },
  {
    head: 127, lines: [[148, 79, 233, 187]], sheet: [67, 213, 242, 400], home: [188, 256],
    copy: flow(190, 367, ["CONTACT", "", "E-MAIL", "NUMERO DE  TÉLÉPHONE", "RÉSEAUX SOCIAUX"]),
  },
];

@customElement("design-canvas")
class DesignCanvas extends LitElement {
  static styles = css`
    :host { display: flex; align-items: flex-start; gap: 16px; box-sizing: border-box; min-width: 0; overflow: hidden; padding: 198px 23px 0; background: #d0ccc7; font: 11px/16px "Inter", sans-serif; color: #6f6c69; }
    figure { flex: none; margin: 0; }
    figcaption { height: 17px; }
    .board { display: block; background: #fff; fill: #c4c4c4; }
    .stroke { fill: none; stroke: #333; stroke-width: 2; }
    .house { fill: none; stroke: #222; stroke-width: 4; stroke-linejoin: round; }
    .copy { fill: #111; font: 12px "Roboto", sans-serif; text-anchor: middle; white-space: pre; }
    .sheet { fill: #fcfcfc; }
  `;
  render() {
    return BOARDS.map((b, i) => html`<figure>
      <figcaption>iPhone 8 - ${i + 1}</figcaption>
      <svg class="board" width="150" height="266" viewBox="0 0 375 665">
        <path d="M0 0h375v54H0z"/>
        ${b.head ? svg`<ellipse cx="188" cy=${b.head} rx="70" ry="67"/><path d="M38 133h299v480H38z"/>` : nothing}
        ${b.extra ?? nothing}
        ${b.sheet ? svg`<rect class="sheet" x=${b.sheet[0]} y=${b.sheet[1]} width=${b.sheet[2]} height=${b.sheet[3]}/>` : nothing}
        ${b.lines.map(([x1, y1, x2, y2]) => svg`<line class="stroke" x1=${x1} y1=${y1} x2=${x2} y2=${y2}/>`)}
        ${b.home ? svg`<g class="house" transform="translate(${b.home[0]} ${b.home[1]})">${HOUSE}</g>` : nothing}
        ${(b.copy ?? []).map(([x, y, t]) => svg`<text class="copy" x=${x} y=${y}>${t}</text>`)}
      </svg>
    </figure>`);
  }
}

/* ---------- Design panel ---------- */
const checker = (id: string) => svg`<clipPath id=${id}><circle cx="8" cy="8" r="8"/></clipPath>
  <g clip-path="url(#${id})"><path fill="#f6ecdf" d="M0 0h16v16H0z"/><path fill="#e6d5bf" d="M4 0h3v3H4zM10 0h3v3h-3zM7 3h3v3H7zM13 3h3v3h-3zM10 6h3v3h-3zM13 9h3v3h-3z"/><path fill="#efcb98" d="M0 0l16 16H0z"/></g><circle cx="8" cy="8" r="7.500" fill="none" stroke="#0000001a"/>`;
const COLORS: [SVGTemplateResult, string][] = [
  [svg`<linearGradient id="lg" x2="0" y2="1"><stop offset="0" stop-color="#a79c90"/><stop offset=".4" stop-color="#55391a"/><stop offset=".5" stop-color="#4d3211"/></linearGradient><circle cx="8" cy="8" r="8" fill="url(#lg)"/>`, "#442B07 (3 paints)"],
  [svg`<circle cx="8" cy="8" r="8" fill="#fefefe"/><path fill="#ececec" d="M1 11h2v2H1zM4 12h2v2H4zM7 13h2v2H7zM10 12h2v2h-2zM13 11h2v2h-2z"/>`, "Linear"],
  [checker("a"), "#D58206"],
  [checker("b"), "#D58206"],
  [svg`<circle cx="8" cy="8" r="8" fill="#bda242"/>`, "#BDA242"],
  [svg`<circle cx="8" cy="8" r="8" fill="#4b3216"/>`, "#442B07"],
];

@customElement("design-panel")
class DesignPanel extends LitElement {
  static styles = css`
    :host { display: block; box-sizing: border-box; overflow: hidden; background: #fff; border-left: 1px solid #e5e5e5; color: #333; font: 11px/16px "Inter", sans-serif; }
    button { all: unset; display: flex; }
    h2 { margin: 0; font-size: 11px; font-weight: 600; line-height: 16px; }
    .head { display: flex; align-items: center; gap: 16px; height: 40px; padding: 0 16px; border-bottom: 1px solid #e5e5e5; color: #b3b3b3; }
    .head .on { color: #333; font-weight: 600; }
    .background { padding: 16px; border-bottom: 1px solid #e5e5e5; }
    .fill { display: flex; align-items: center; gap: 8px; height: 16px; margin-top: 16px; }
    .swatch { width: 16px; height: 16px; background: #d0ccc7; box-shadow: inset 0 0 0 1px #c8c4bf; }
    .hex { width: 65px; }
    .fill button { margin-left: auto; }
    .styles { padding: 15px 16px 20px; border-bottom: 1px solid #e5e5e5; }
    .row { display: flex; align-items: center; gap: 8px; height: 34px; padding-left: 1px; }
    .text { margin: 13px 0 19px; }
    .colors { margin-top: 13px; }
    .ag { width: 16px; color: #000; font: 700 14px/16px "Liberation Serif", serif; }
    .export { display: flex; align-items: center; justify-content: space-between; height: 48px; padding: 0 18px 0 16px; border-bottom: 1px solid #e5e5e5; color: #b3b3b3; }
    .line { fill: none; stroke: #b3b3b3; }
    .dark { stroke: #333; }
  `;
  render() {
    return html`
      <div class="head"><button class="on">Design</button><button>Prototype</button><button>Inspect</button></div>
      <section class="background">
        <h2>Background</h2>
        <div class="fill"><span class="swatch"></span><span class="hex">D0CCC7</span><span>100%</span>
          <button aria-label="Visibilité">${icon(16, svg`<path d="M2 8q6-7.500 12 0-6 7.500-12 0z"/><circle cx="8" cy="8" r="2" fill="#333"/>`, "line dark")}</button></div>
      </section>
      <section class="styles">
        <h2>Text Styles</h2>
        <div class="row text"><span class="ag">Ag</span>texte titre</div>
        <h2>Color Styles</h2>
        <div class="colors">${COLORS.map(([art, name]) => html`<div class="row">${icon(16, art)}${name}</div>`)}</div>
      </section>
      <div class="export"><h2>Export</h2><button aria-label="Ajouter un export">${icon(14, svg`<path d="M7.500 1.500v11M2 7.500h11"/>`, "line")}</button></div>`;
  }
}

/* ---------- Root ---------- */
@customElement("app-root")
class AppRoot extends LitElement {
  static styles = css`
    :host { display: grid; grid-template: auto minmax(0, 1fr) / 72px minmax(0, 1fr); height: 100vh; overflow: hidden; }
    system-bar { grid-column: 1 / -1; }
    .window { display: grid; grid-template-rows: auto auto minmax(0, 1fr); min-height: 0; }
    .work { position: relative; display: grid; grid-template-columns: 241px minmax(0, 1fr) 241px; min-height: 0; }
    .help { all: unset; position: absolute; right: 24px; bottom: 24px; width: 36px; height: 36px; border-radius: 50%; background: #222; color: #fff; font: 300 15px/36px "Inter", sans-serif; text-align: center; box-shadow: 0 1px 3px #0004; }
  `;
  render() {
    return html`
      <system-bar></system-bar>
      <app-dock></app-dock>
      <main class="window">
        <browser-chrome></browser-chrome>
        <figma-toolbar></figma-toolbar>
        <div class="work">
          <layers-panel></layers-panel>
          <design-canvas></design-canvas>
          <design-panel></design-panel>
          <button class="help" aria-label="Aide">?</button>
        </div>
      </main>`;
  }
}
